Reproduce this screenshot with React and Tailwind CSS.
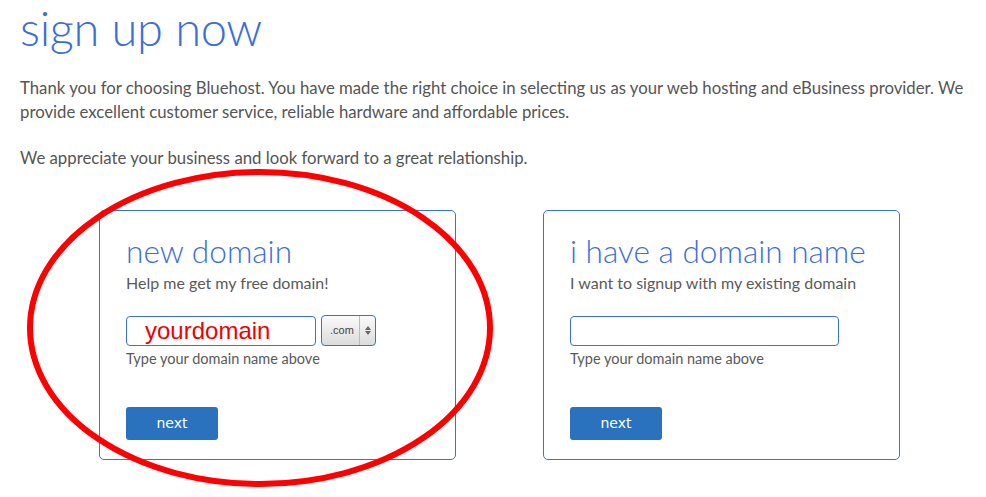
import React from 'react';

function DomainCard({ title, subtitle, children }) {
  return (
    <div className="w-[357px] h-[250px] border border-[#3d70d6] rounded-[5px] pl-[26px] pt-[20px]">
      <h2 className="text-[31.6px] leading-[40px] font-light text-[#3a6fd8]">{title}</h2>
      <p className="text-[16px] leading-[22px] text-[#5a5a5a] mt-[1px]">{subtitle}</p>
      <div className="mt-[21px] flex items-center gap-[5px] h-[31px]">{children}</div>
      <p className="text-[14.5px] leading-[20px] text-[#5a5a5a] mt-[3px]">Type your domain name above</p>
      <button className="mt-[38px] w-[92px] h-[33px] rounded-[3px] bg-[#2a72bd] text-white text-[14px] font-['DejaVu_Sans',sans-serif]">
        next
      </button>
    </div>
  );
}

export default function App() {
  return (
    <div className="relative w-[986px] h-[497px] bg-white overflow-hidden font-['Lato',sans-serif] px-[20px]">
      {/* ── Titre ── */}
      <h1 className="text-[47px] leading-[56px] font-light text-[#3a6fd8] tracking-[-0.3px]">sign up now</h1>

      {/* ── Intro ── */}
      <p className="mt-[20px] text-[16.75px] leading-[24px] text-[#555]">
        Thank you for choosing Bluehost. You have made the right choice in selecting us as your web hosting and eBusiness provider. We provide excellent customer service, reliable hardware and affordable prices.
      </p>
      <p className="mt-[22px] text-[16.75px] leading-[24px] text-[#555]">
        We appreciate your business and look forward to a great relationship.
      </p>

      {/* ── Cartes ── */}
      <div className="mt-[40px] ml-[79px] flex gap-[87px]">
        <DomainCard title="new domain" subtitle="Help me get my free domain!">
          <div className="w-[190px] h-[30px] border border-[#3d70d6] rounded-[4px] pl-[18px] flex items-center text-[24px] text-[#f00000] font-['Liberation_Sans',sans-serif]">
            yourdomain
          </div>
          <div className="w-[55px] h-[31px] border border-[#3d70d6] rounded-[4px] bg-gradient-to-b from-[#fafafa] to-[#dcdcdc] flex items-stretch overflow-hidden">
            <span className="flex-1 flex items-center pl-[8px] text-[11px] text-[#444] font-['Liberation_Sans',sans-serif] overflow-hidden whitespace-nowrap">.com</span>
            <span className="w-[16px] border-l border-[#bbb] flex flex-col items-center justify-center gap-[1px]">
              <svg width="6" height="4" viewBox="0 0 6 4"><path d="M0 4 L3 0 L6 4 Z" fill="#666" /></svg>
              <svg width="6" height="4" viewBox="0 0 6 4"><path d="M0 0 L3 4 L6 0 Z" fill="#666" /></svg>
            </span>
          </div>
        </DomainCard>

        <DomainCard title="i have a domain name" subtitle="I want to signup with my existing domain">
          <div className="w-[269px] h-[30px] border border-[#3d70d6] rounded-[4px]" />
        </DomainCard>
      </div>

      {/* ── Annotation ── */}
      <svg className="absolute left-0 top-0 pointer-events-none" width="986" height="497">
        <ellipse cx="260" cy="328" rx="230" ry="156" fill="none" stroke="#ff0000" strokeWidth="6" />
      </svg>
    </div>
  );
}
